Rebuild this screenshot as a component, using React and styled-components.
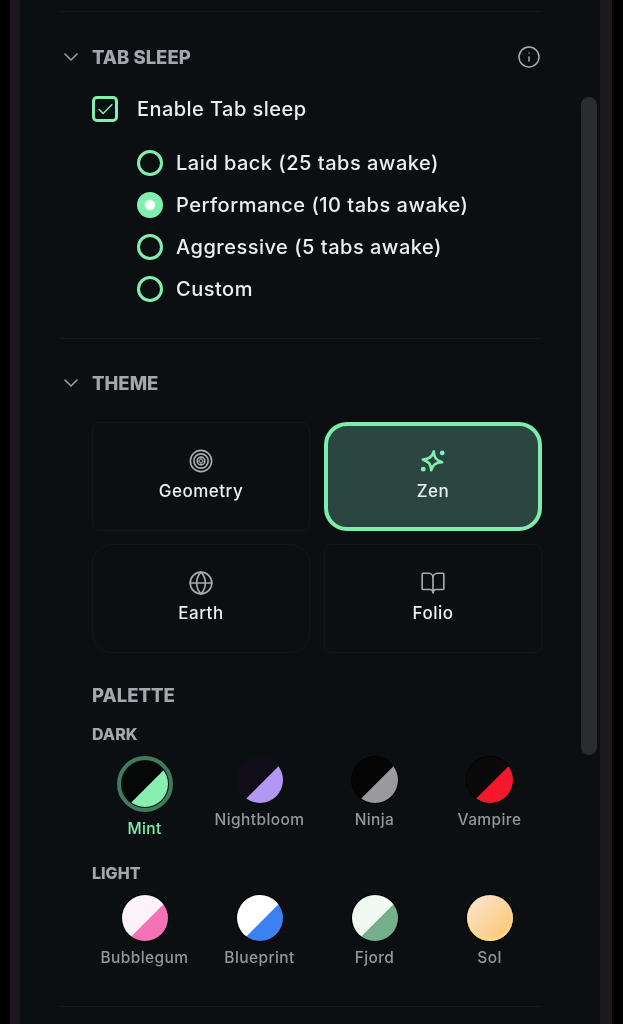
import React from "react";
import styled, { createGlobalStyle } from "styled-components";
import { BookOpen, Check, ChevronDown, Globe, Info } from "lucide-react";

const Global = createGlobalStyle`
  html, body {
    margin: 0;
    height: 100%;
    background: #000;
    overflow: hidden;
  }
  * { box-sizing: border-box; }
`;

const Screen = styled.div`
  width: 623px;
  height: 1024px;
  padding: 0 11px 0 10px;
  background: #000;
  font-family: "Inter", "Liberation Sans", sans-serif;
`;

const Frame = styled.div`
  position: relative;
  height: 100%;
  padding: 0 58px 0 40px;
  background: #0b0f12;
  border-left: 10px solid #1c171d;
  border-right: 12px solid #1e181e;
  overflow: hidden;
  filter: blur(0.4px);
`;

const Scrollbar = styled.div`
  position: absolute;
  top: 97px;
  right: 3px;
  width: 16px;
  height: 658px;
  border-radius: 8px;
  background: #292d2e;
`;

const Divider = styled.div`
  height: 1px;
  background: #131a1b;
  margin-top: ${(p) => p.$top}px;
`;

const Section = styled.section`
  padding-top: ${(p) => p.$top}px;
`;

const Header = styled.div`
  display: flex;
  align-items: center;
  height: 24px;
`;

const Chevron = styled(ChevronDown)`
  width: 24px;
  height: 24px;
  margin: 0 9px 0 -1px;
  stroke-width: 1.6;
  color: #9a9da3;
`;

const Title = styled.h2`
  flex: 1;
  margin: 0;
  font-size: 18.5px;
  font-weight: 800;
  color: #a4a7ae;
`;

const InfoIcon = styled(Info)`
  width: 24px;
  height: 24px;
  margin-right: 1px;
  stroke-width: 1.5;
  color: #a9abb0;
`;

const Body = styled.div`
  padding-left: 32px;
`;

const CheckRow = styled.label`
  display: flex;
  align-items: center;
  gap: 19px;
  height: 26px;
  margin-top: 27px;
  font-size: 20px;
  font-weight: 500;
  letter-spacing: 0.45px;
  color: #eceef0;
`;

const CheckBox = styled.span`
  display: flex;
  align-items: center;
  justify-content: center;
  width: 26px;
  height: 26px;
  border: 3px solid #82eeb0;
  border-radius: 5px;
  color: #82eeb0;
`;

const RadioList = styled.div`
  display: flex;
  flex-direction: column;
  gap: 16px;
  margin-top: 28px;
  padding-left: 45px;
`;

const RadioRow = styled.label`
  display: flex;
  align-items: center;
  gap: 13px;
  height: 26px;
  font-size: 20px;
  font-weight: 500;
  letter-spacing: 0.5px;
  color: #eceef0;
`;

const Radio = styled.span`
  width: 26px;
  height: 26px;
  border-radius: 50%;
  border: 3px solid #82eeb0;
  background: ${(p) =>
    p.$on ? "radial-gradient(circle, #fff 0 4px, #82eeb0 6px)" : "transparent"};
`;

const CardGrid = styled.div`
  display: grid;
  grid-template-columns: 218px 218px;
  grid-auto-rows: 109px;
  gap: 13px 14px;
  margin-top: 27px;
`;

const Card = styled.div`
  display: flex;
  flex-direction: column;
  align-items: center;
  gap: 7px;
  padding-top: ${(p) => (p.$active ? 22 : 25)}px;
  border-radius: ${(p) => (p.$active ? 23 : p.$round ? 20 : 8)}px;
  border: ${(p) => (p.$active ? "4px solid #7eecac" : "1px solid #12181a")};
  background: ${(p) => (p.$active ? "#2b4541" : "transparent")};
  font-size: 17px;
  line-height: 21px;
  font-weight: 500;
  letter-spacing: 0.5px;
  color: #eceef0;
  svg {
    display: block;
    width: 26px;
    height: 26px;
    color: ${(p) => (p.$active ? "#82eeb0" : "#a9abb0")};
  }
`;

const PaletteTitle = styled.h3`
  margin: 30px 0 0;
  font-size: 18.5px;
  line-height: 24px;
  font-weight: 800;
  color: #a4a7ae;
`;

const GroupTitle = styled.h4`
  margin: ${(p) => p.$top}px 0 0;
  font-size: 16px;
  line-height: 20px;
  font-weight: 800;
  color: #a4a7ae;
`;

const Swatches = styled.div`
  display: grid;
  grid-template-columns: repeat(4, 115px);
  justify-content: center;
  margin-top: ${(p) => p.$top}px;
`;

const Swatch = styled.div`
  display: flex;
  flex-direction: column;
  align-items: center;
  gap: 7px;
  font-size: 15.5px;
  line-height: 20px;
  font-weight: 500;
  letter-spacing: 0.4px;
  color: ${(p) => (p.$active ? "#82eeb0" : "#94979c")};
`;

const Dot = styled.div`
  width: ${(p) => (p.$active ? 56 : 46)}px;
  height: ${(p) => (p.$active ? 56 : 46)}px;
  margin-top: ${(p) => (p.$active ? -1 : 0)}px;
  padding: ${(p) => (p.$active ? 1 : 0)}px;
  border-radius: 50%;
  background: ${(p) => p.$fill};
  background-origin: content-box;
  background-clip: content-box;
  border: ${(p) => (p.$active ? "4px solid #427a5c" : "none")};
  box-shadow: ${(p) => (p.$active ? "none" : p.$rim || "0 0 0 1px #000")};
`;

const split = (a, b) => `linear-gradient(135deg, ${a} 55%, ${b} 55.6%)`;

const dark = [
  { name: "Nightbloom", fill: split("#110e1a", "#b397f5"), rim: "none" },
  { name: "Ninja", fill: split("#050505", "#9a9a9c") },
  { name: "Vampire", fill: split("#0a0a0a", "#f5182c") },
];

const light = [
  { name: "Bubblegum", fill: split("#fdf1fa", "#f471b5") },
  { name: "Blueprint", fill: split("#ffffff", "#3b82f0") },
  { name: "Fjord", fill: split("#f0f8f3", "#74b08c") },
  {
    name: "Sol",
    fill: "linear-gradient(135deg, #fbe6d2, #fdc46e)",
    rim: "0 0 0 1px #000, inset 0 -2px 3px #ffe27e",
  },
];

const GeometryIcon = () => (
  <svg viewBox="0 0 24 24" fill="none" stroke="currentColor" strokeWidth="1.5">
    <circle cx="12" cy="12" r="9.8" />
    <circle cx="12" cy="12" r="6.6" />
    <circle cx="12" cy="12" r="3.6" />
    <path d="M12 9.8 14 12l-2 2.2L10 12z" strokeWidth="1" />
  </svg>
);

const ZenIcon = () => (
  <svg viewBox="0 0 24 24" fill="none" stroke="currentColor" strokeWidth="2.4" strokeLinejoin="round">
    <path d="M11.500 3c1 5.500 3 7.600 9 8.800-6 1.200-8 3.300-9 8.800-1-5.500-3-7.600-9-8.800 6-1.200 8-3.300 9-8.800z" transform="rotate(8 11.500 11.800)" />
    <circle cx="20.500" cy="4.500" r="2.200" fill="currentColor" stroke="none" />
    <circle cx="3" cy="19.500" r="2.200" fill="currentColor" stroke="none" />
  </svg>
);

export default function App() {
  return (
    <Screen>
      <Global />
      <Frame>
        <Scrollbar />
        <Divider $top={11} />
        <Section $top={33}>
          <Header>
            <Chevron />
            <Title>TAB SLEEP</Title>
            <InfoIcon />
          </Header>
          <Body>
            <CheckRow>
              <CheckBox>
                <Check size={19} strokeWidth={2} />
              </CheckBox>
              Enable Tab sleep
            </CheckRow>
            <RadioList>
              <RadioRow><Radio />Laid back (25 tabs awake)</RadioRow>
              <RadioRow><Radio $on />Performance (10 tabs awake)</RadioRow>
              <RadioRow><Radio />Aggressive (5 tabs awake)</RadioRow>
              <RadioRow><Radio />Custom</RadioRow>
            </RadioList>
          </Body>
        </Section>
        <Divider $top={36} />
        <Section $top={32}>
          <Header>
            <Chevron />
            <Title>THEME</Title>
          </Header>
          <Body>
            <CardGrid>
              <Card><GeometryIcon />Geometry</Card>
              <Card $active $round><ZenIcon />Zen</Card>
              <Card $round><Globe strokeWidth={1.5} />Earth</Card>
              <Card><BookOpen strokeWidth={1.5} />Folio</Card>
            </CardGrid>
            <PaletteTitle>PALETTE</PaletteTitle>
            <GroupTitle $top={17}>DARK</GroupTitle>
            <Swatches $top={13}>
              <Swatch $active>
                <Dot $active $fill={split("#060808", "#86f0b0")} />
                Mint
              </Swatch>
              {dark.map((s) => (
                <Swatch key={s.name}>
                  <Dot $fill={s.fill} $rim={s.rim} />
                  {s.name}
                </Swatch>
              ))}
            </Swatches>
            <GroupTitle $top={24}>LIGHT</GroupTitle>
            <Swatches $top={12}>
              {light.map((s) => (
                <Swatch key={s.name}>
                  <Dot $fill={s.fill} $rim={s.rim} />
                  {s.name}
                </Swatch>
              ))}
            </Swatches>
          </Body>
        </Section>
        <Divider $top={38} />
      </Frame>
    </Screen>
  );
}
